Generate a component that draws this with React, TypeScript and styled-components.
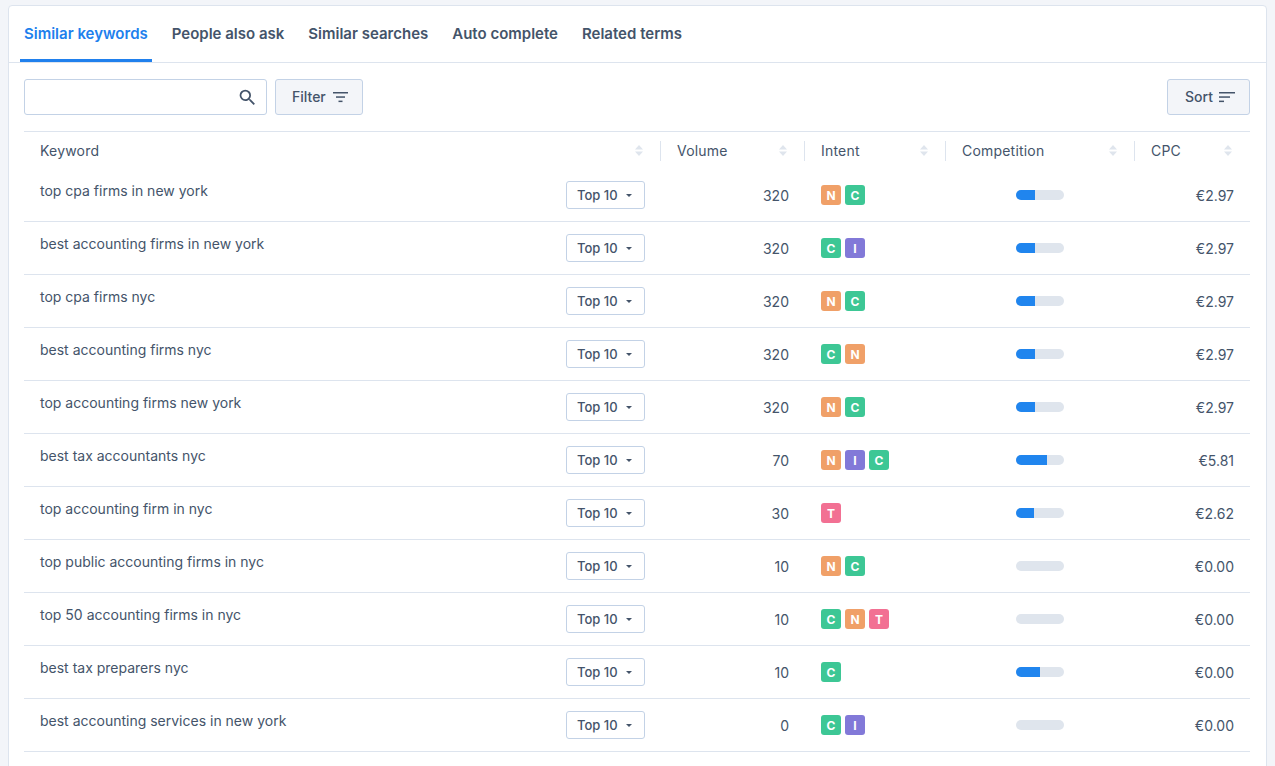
import React from "react"
import styled, { createGlobalStyle } from "styled-components"

const GlobalStyle = createGlobalStyle`
  html, body {
    margin: 0;
    height: 100%;
    overflow: hidden;
    background: #f3f5f9;
    font-family: Inter, "Liberation Sans", sans-serif;
    color: #44546a;
  }
  * { box-sizing: border-box; }
`

const Card = styled.div`
  margin: 5px 8px 0 8px;
  height: 800px;
  background: #fff;
  border: 1px solid #dde4ee;
  border-radius: 4px;
`

const Tabs = styled.div`
  display: flex;
  gap: 16px;
  height: 57px;
  padding: 0 11px;
  border-bottom: 1px solid #dde4ee;
`

const Tab = styled.div<{ $active?: boolean }>`
  height: 56px;
  padding: 0 4px;
  line-height: 56px;
  font-size: 15px;
  font-weight: 600;
  color: ${(p) => (p.$active ? "#2080ed" : "#44546a")};
  border-bottom: 3px solid ${(p) => (p.$active ? "#2080ed" : "transparent")};
`

const Body = styled.div`
  padding: 16px 16px 0 15px;
`

const Toolbar = styled.div`
  display: flex;
  align-items: center;
  gap: 8px;
  height: 36px;
  margin-bottom: 16px;
`

const Search = styled.div`
  display: flex;
  align-items: center;
  justify-content: flex-end;
  width: 243px;
  height: 36px;
  padding-right: 8px;
  border: 1px solid #c3d2e6;
  border-radius: 3px;
`

const ToolButton = styled.div<{ $push?: boolean }>`
  display: flex;
  align-items: center;
  justify-content: space-between;
  width: ${(p) => (p.$push ? "83px" : "88px")};
  height: 36px;
  padding: 0 14px 1px ${(p) => (p.$push ? "17px" : "16px")};
  margin-left: ${(p) => (p.$push ? "auto" : "0")};
  background: #f3f5f9;
  border: 1px solid #c3d2e6;
  border-radius: 3px;
  font-size: 14px;
  font-weight: 500;
`

const columns = "636px 144px 141px 189px 116px"

const HeaderRow = styled.div`
  display: grid;
  grid-template-columns: ${columns};
  align-items: center;
  height: 38px;
  border-top: 1px solid #dde4ee;
`

const HeaderCell = styled.div<{ $first?: boolean }>`
  display: flex;
  align-items: center;
  justify-content: space-between;
  height: 20px;
  padding: 0 17px 0 16px;
  font-size: 14px;
  font-weight: 400;
  letter-spacing: 0.2px;
  border-left: ${(p) => (p.$first ? "none" : "1px solid #dde4ee")};

  &:last-child {
    padding-right: 18px;
  }
`

const Row = styled.div`
  display: grid;
  grid-template-columns: ${columns};
  align-items: center;
  height: 53px;
  border-bottom: 1px solid #dde4ee;
  font-size: 14px;
`

const KeywordCell = styled.div`
  display: flex;
  align-items: center;
  justify-content: space-between;
  padding: 0 15px 0 16px;
`

const KeywordText = styled.span`
  margin-top: -10px;
`

const TopButton = styled.div`
  display: flex;
  align-items: center;
  gap: 8px;
  width: 79px;
  height: 28px;
  padding-left: 10px;
  border: 1px solid #c3d2e6;
  border-radius: 3px;
  font-size: 13px;
  font-weight: 500;
`

const Caret = styled.span`
  width: 0;
  height: 0;
  border-left: 3.5px solid transparent;
  border-right: 3.5px solid transparent;
  border-top: 3.5px solid #44546a;
`

const NumberCell = styled.div<{ $pad: number }>`
  padding-right: ${(p) => p.$pad}px;
  text-align: right;
`

const Badges = styled.div`
  display: flex;
  gap: 4px;
  padding-left: 17px;
`

const badgeColors: Record<string, string> = {
  N: "#f0a068",
  C: "#3dc795",
  I: "#8279d8",
  T: "#f27093",
}

const Badge = styled.span<{ $kind: string }>`
  display: flex;
  align-items: center;
  justify-content: center;
  width: 20px;
  height: 20px;
  border-radius: 3px;
  background: ${(p) => badgeColors[p.$kind]};
  color: #fff;
  font-size: 12px;
  font-weight: 700;
`

const BarCell = styled.div`
  display: flex;
  justify-content: center;
  padding-left: 1px;
`

const Bar = styled.div`
  width: 48px;
  height: 10px;
  border-radius: 5px;
  background: #dfe5ed;
  overflow: hidden;
`

const BarFill = styled.div`
  height: 100%;
  background: #2085ee;
`

const SearchIcon = () => (
  <svg width="21" height="21" viewBox="0 0 24 24" fill="#44546a">
    <path d="M15.5 14h-.79l-.28-.27A6.47 6.47 0 0 0 16 9.5 6.5 6.5 0 1 0 9.5 16c1.61 0 3.09-.59 4.23-1.57l.27.28v.79l5 4.99L20.49 19l-4.99-5zm-6 0C7.01 14 5 11.99 5 9.5S7.01 5 9.5 5 14 7.01 14 9.5 11.99 14 9.5 14z" />
  </svg>
)

const FilterIcon = () => (
  <svg width="15" height="12" viewBox="0 0 15 12" fill="#44546a">
    <rect x="0" y="1" width="15" height="1.5" />
    <rect x="3" y="5.3" width="9" height="1.5" />
    <rect x="5.5" y="9.6" width="4" height="1.5" />
  </svg>
)

const SortIcon = () => (
  <svg width="16" height="12" viewBox="0 0 16 12" fill="#44546a">
    <rect x="0" y="1" width="16" height="1.5" />
    <rect x="0" y="5.3" width="11" height="1.5" />
    <rect x="0" y="9.6" width="5" height="1.5" />
  </svg>
)

const SortArrows = () => (
  <svg width="8" height="11" viewBox="0 0 8 11" fill="#dfe5ed">
    <path d="M4 0l4 4.5H0z" />
    <path d="M4 11L0 6.5h8z" />
  </svg>
)

const tabs = ["Similar keywords", "People also ask", "Similar searches", "Auto complete", "Related terms"]
const headers = ["Keyword", "Volume", "Intent", "Competition", "CPC"]

const rows = [
  { keyword: "top cpa firms in new york", volume: 320, intent: "NC", bar: 40, cpc: "€2.97" },
  { keyword: "best accounting firms in new york", volume: 320, intent: "CI", bar: 40, cpc: "€2.97" },
  { keyword: "top cpa firms nyc", volume: 320, intent: "NC", bar: 40, cpc: "€2.97" },
  { keyword: "best accounting firms nyc", volume: 320, intent: "CN", bar: 40, cpc: "€2.97" },
  { keyword: "top accounting firms new york", volume: 320, intent: "NC", bar: 40, cpc: "€2.97" },
  { keyword: "best tax accountants nyc", volume: 70, intent: "NIC", bar: 65, cpc: "€5.81" },
  { keyword: "top accounting firm in nyc", volume: 30, intent: "T", bar: 38, cpc: "€2.62" },
  { keyword: "top public accounting firms in nyc", volume: 10, intent: "NC", bar: 0, cpc: "€0.00" },
  { keyword: "top 50 accounting firms in nyc", volume: 10, intent: "CNT", bar: 0, cpc: "€0.00" },
  { keyword: "best tax preparers nyc", volume: 10, intent: "C", bar: 50, cpc: "€0.00" },
  { keyword: "best accounting services in new york", volume: 0, intent: "CI", bar: 0, cpc: "€0.00" },
]

export default function App() {
  return (
    <>
      <GlobalStyle />
      <Card>
        <Tabs>
          {tabs.map((t, i) => (
            <Tab key={t} $active={i === 0}>
              {t}
            </Tab>
          ))}
        </Tabs>
        <Body>
          <Toolbar>
            <Search>
              <SearchIcon />
            </Search>
            <ToolButton>
              Filter <FilterIcon />
            </ToolButton>
            <ToolButton $push>
              Sort <SortIcon />
            </ToolButton>
          </Toolbar>
          <HeaderRow>
            {headers.map((h, i) => (
              <HeaderCell key={h} $first={i === 0}>
                {h}
                <SortArrows />
              </HeaderCell>
            ))}
          </HeaderRow>
          {rows.map((r) => (
            <Row key={r.keyword}>
              <KeywordCell>
                <KeywordText>{r.keyword}</KeywordText>
                <TopButton>
                  Top 10 <Caret />
                </TopButton>
              </KeywordCell>
              <NumberCell $pad={15}>{r.volume}</NumberCell>
              <Badges>
                {r.intent.split("").map((k, i) => (
                  <Badge key={i} $kind={k}>
                    {k}
                  </Badge>
                ))}
              </Badges>
              <BarCell>
                <Bar>
                  <BarFill style={{ width: `${r.bar}%` }} />
                </Bar>
              </BarCell>
              <NumberCell $pad={16}>{r.cpc}</NumberCell>
            </Row>
          ))}
        </Body>
      </Card>
    </>
  )
}
